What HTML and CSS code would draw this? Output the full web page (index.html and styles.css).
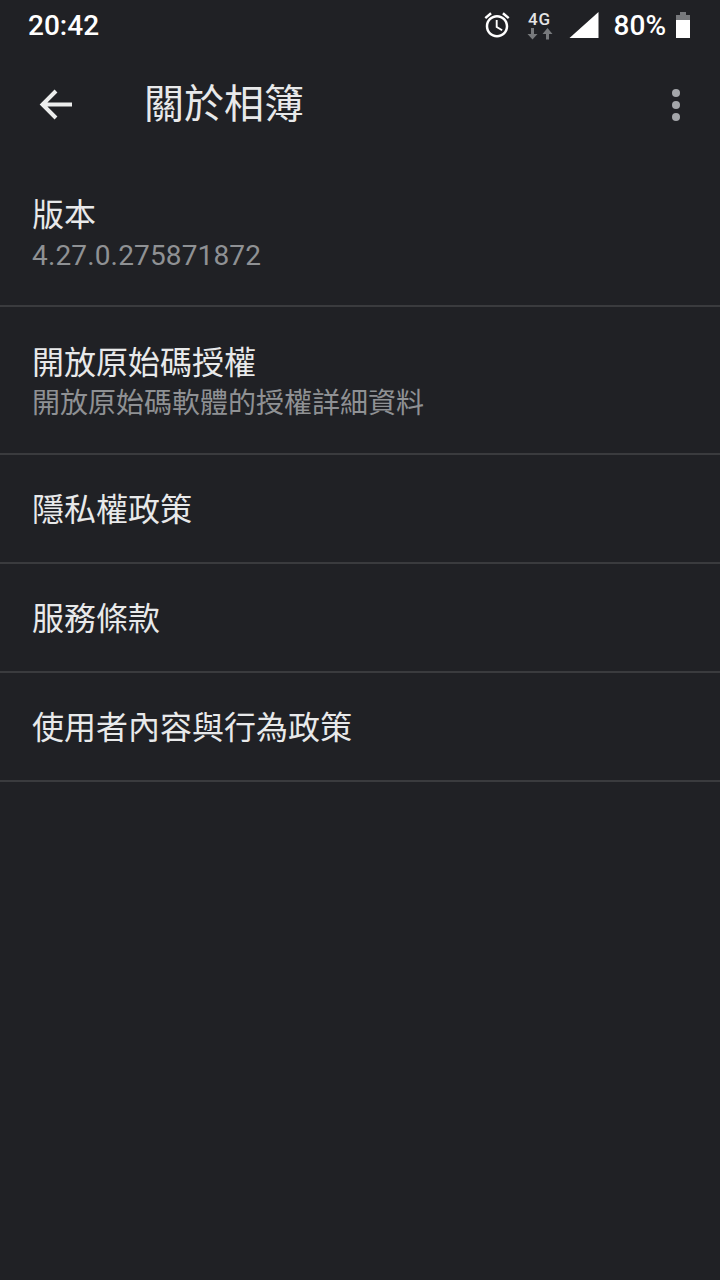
FILE: index.html
```html
<!DOCTYPE html>
<html lang="zh-Hant">
<head>
<meta charset="utf-8">
<title>關於相簿</title>
<link rel="stylesheet" href="styles.css">
</head>
<body>
<div class="status">
  <span class="time">20:42</span>
  <div class="status-right">
    <svg class="ic-alarm" width="30" height="30" viewBox="0 0 24 24"><path fill="#fff" d="M22 5.72l-4.6-3.86-1.29 1.53 4.6 3.86L22 5.72zM7.88 3.39L6.6 1.86 2 5.71l1.29 1.53 4.59-3.85zM12.5 8H11v6l4.75 2.85.75-1.23-4-2.37V8zM12 4c-4.97 0-9 4.03-9 9s4.03 9 9 9 9-4.03 9-9-4.03-9-9-9zm0 16c-3.87 0-7-3.13-7-7s3.13-7 7-7 7 3.13 7 7-3.13 7-7 7z"/></svg>
    <div class="net">
      <span class="net-label">4G</span>
      <svg width="26" height="13" viewBox="0 0 26 13"><path fill="#77797c" d="M4 1h3v6h3.500L5.500 12.500 .5 7H4zM19 12.500h3V7h3.500l-5-6-5 6H19z"/></svg>
    </div>
    <svg class="ic-signal" width="30" height="28" viewBox="0 0 30 28"><path fill="#fff" d="M29.500 1v26H.5z"/></svg>
    <span class="pct">80%</span>
    <svg class="ic-batt" width="16" height="28" viewBox="0 0 16 28"><path fill="#fff" d="M1 9h14v18H1z"/><path fill="#77797c" d="M5 1h6v3h4v5H1V4h4z"/></svg>
  </div>
</div>
<header class="toolbar">
  <svg class="ic-back" width="48" height="48" viewBox="0 .5 48 48"><path fill="none" stroke="#eceded" stroke-width="4" d="M40 24H10M24 10.500L10.500 24 24 37.500"/></svg>
  <h1 class="title">關於相簿</h1>
  <div class="more"><i></i><i></i><i></i></div>
</header>
<ul class="list">
  <li class="row two"><div class="primary">版本</div><div class="secondary num">4.27.0.275871872</div></li>
  <li class="row two"><div class="primary">開放原始碼授權</div><div class="secondary">開放原始碼軟體的授權詳細資料</div></li>
  <li class="row"><div class="primary">隱私權政策</div></li>
  <li class="row"><div class="primary">服務條款</div></li>
  <li class="row"><div class="primary">使用者內容與行為政策</div></li>
</ul>
</body>
</html>
```
FILE: styles.css
```css
* { box-sizing: border-box; }
html, body { margin: 0; padding: 0; }
body {
  width: 720px;
  height: 1280px;
  overflow: hidden;
  background: #202125;
  color: #e8e9ea;
  font-family: Roboto, "Noto Sans CJK TC", sans-serif;
}
.status {
  height: 50px;
  display: flex;
  align-items: center;
  justify-content: space-between;
  padding: 0 29px 0 28px;
  color: #fff;
  font-weight: 500;
  font-size: 28px;
}
.status-right { display: flex; align-items: center; }
.ic-alarm { margin-right: 14px; }
.net { width: 28px; display: flex; flex-direction: column; align-items: center; margin-right: 15px; }
.net-label { font-size: 17px; line-height: 16px; color: #e4e4e5; letter-spacing: 1px; }
.ic-signal { margin-right: 15px; }
.pct { margin-right: 9px; }
.toolbar {
  height: 109px;
  display: flex;
  align-items: center;
  padding-left: 32px;
  padding-right: 40px;
}
.ic-back { flex: none; }
.title {
  margin: 0 0 0 64px;
  flex: 1;
  font-size: 40px;
  font-weight: 400;
  line-height: 56px;
  color: #e8e9ea;
}
.more { display: flex; flex-direction: column; gap: 4px; width: 8px; }
.more i { display: block; width: 8px; height: 8px; border-radius: 50%; background: #a4a6aa; }
.list { list-style: none; margin: 0; padding: 0; }
.row {
  height: 109px;
  padding: 2px 32px 0;
  display: flex;
  flex-direction: column;
  justify-content: center;
  border-bottom: 2px solid #3a3b3e;
}
.row.two { height: 148px; padding-top: 4px; }
.primary { font-size: 32px; line-height: 44px; color: #e8e9ea; }
.secondary { font-size: 28px; line-height: 38px; color: #8f9194; }
.num { letter-spacing: 0.15px; }
```
